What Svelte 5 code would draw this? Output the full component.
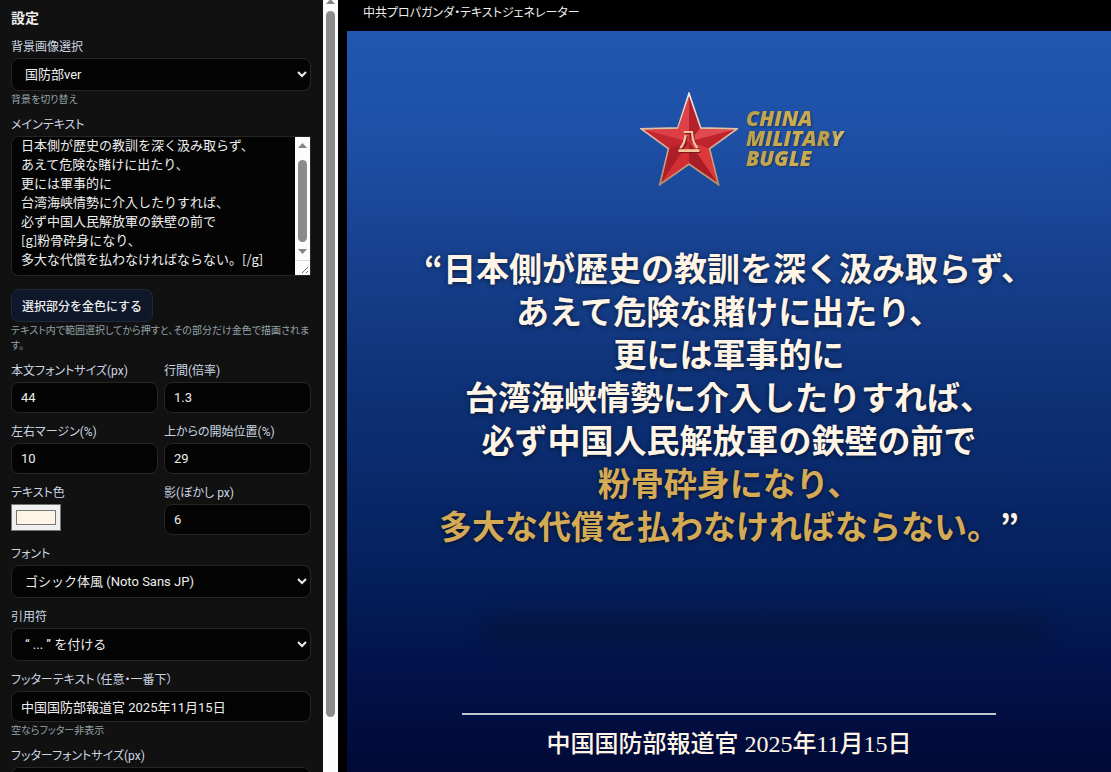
<script>
  let background = $state('mod');
  let mainText = $state(`日本側が歴史の教訓を深く汲み取らず、
あえて危険な賭けに出たり、
更には軍事的に
台湾海峡情勢に介入したりすれば、
必ず中国人民解放軍の鉄壁の前で
[g]粉骨砕身になり、
多大な代償を払わなければならない。[/g]`);
  let fontSize = $state('44');
  let lineHeight = $state('1.3');
  let margin = $state('10');
  let startY = $state('29');
  let color = $state('#fff5e6');
  let shadow = $state('6');
  let font = $state('sans');
  let quotes = $state('double');
  let footer = $state('中国国防部報道官 2025年11月15日');
  let footerSize = $state('32');
  let area;

  // Keep the last lines of the main text in view.
  $effect(() => {
    area.scrollTop = 11;
  });

  const lines = $derived.by(() => {
    let gold = false;
    return mainText.split('\n').map((raw) => {
      if (raw.includes('[g]')) gold = true;
      const line = { text: raw.replace('[g]', '').replace('[/g]', ''), gold };
      if (raw.includes('[/g]')) gold = false;
      return line;
    });
  });

  function goldSelection() {
    const { selectionStart: a, selectionEnd: b } = area;
    if (a === b) return;
    mainText = mainText.slice(0, a) + '[g]' + mainText.slice(a, b) + '[/g]' + mainText.slice(b);
  }
</script>

<div class="app">
  <aside>
    <form class="settings" onsubmit={(e) => e.preventDefault()}>
      <h1>設定</h1>
      <div class="field">
        <label for="bg">背景画像選択</label>
        <select id="bg" bind:value={background}>
          <option value="mod">国防部ver</option>
        </select>
        <p class="hint">背景を切り替え</p>
      </div>
      <div class="field">
        <label for="main">メインテキスト</label>
        <div class="area">
          <textarea id="main" bind:value={mainText} bind:this={area} spellcheck="false"></textarea>
          <div class="area-bar" aria-hidden="true">
            <svg viewBox="0 0 15 138" preserveAspectRatio="none">
              <rect width="15" height="138" fill="#fcfcfc" />
              <path d="M3 11l4.500-5 4.500 5zM3 112l4.500 5 4.500-5z" fill="#858585" />
              <rect x="3" y="23" width="9" height="82" rx="4.500" fill="#8b8b8b" />
              <path d="M0 123.500h15" stroke="#dcdcdc" />
              <path d="M7 136l6-6M11 136l2-2" stroke="#707070" />
            </svg>
          </div>
        </div>
        <button type="button" onclick={goldSelection}>選択部分を金色にする</button>
        <p class="hint">テキスト内で範囲選択してから押すと、その部分だけ金色で描画されます。</p>
      </div>
      <div class="pair">
        <div class="field">
          <label for="size">本文フォントサイズ(px)</label>
          <input id="size" type="text" inputmode="numeric" bind:value={fontSize} />
        </div>
        <div class="field">
          <label for="lh">行間(倍率)</label>
          <input id="lh" type="text" inputmode="decimal" bind:value={lineHeight} />
        </div>
        <div class="field">
          <label for="margin">左右マージン(%)</label>
          <input id="margin" type="text" inputmode="numeric" bind:value={margin} />
        </div>
        <div class="field">
          <label for="start">上からの開始位置(%)</label>
          <input id="start" type="text" inputmode="numeric" bind:value={startY} />
        </div>
        <div class="field">
          <label for="color">テキスト色</label>
          <input id="color" type="color" bind:value={color} />
        </div>
        <div class="field">
          <label for="shadow">影(ぼかし px)</label>
          <input id="shadow" type="text" inputmode="numeric" bind:value={shadow} />
        </div>
      </div>
      <div class="field">
        <label for="font">フォント</label>
        <select id="font" bind:value={font}>
          <option value="sans">ゴシック体風 (Noto Sans JP)</option>
        </select>
      </div>
      <div class="field">
        <label for="quotes">引用符</label>
        <select id="quotes" bind:value={quotes}>
          <option value="double">“ ... ” を付ける</option>
        </select>
      </div>
      <div class="field">
        <label for="footer">フッターテキスト（任意・一番下）</label>
        <input id="footer" type="text" bind:value={footer} />
        <p class="hint">空ならフッター非表示</p>
      </div>
      <div class="field">
        <label for="fsize">フッターフォントサイズ(px)</label>
        <input id="fsize" type="text" inputmode="numeric" bind:value={footerSize} />
      </div>
    </form>
    <div class="side-bar" aria-hidden="true">
      <svg width="15" height="11" viewBox="0 0 15 11"><path d="M3 4l4.500-5 4.500 5z" fill="#858585" /></svg>
      <div class="thumb"></div>
    </div>
  </aside>

  <main>
    <header>中共プロパガンダ・テキストジェネレーター</header>
    <section class="poster">
      <div class="logo">
        <svg class="star" viewBox="60 36 294 282" aria-hidden="true">
          <defs>
            <linearGradient id="rim" x1="0" y1="0" x2="0" y2="1">
              <stop offset="0" stop-color="#f4eee4" />
              <stop offset="0.5" stop-color="#d9b295" />
              <stop offset="1" stop-color="#b58b68" />
            </linearGradient>
          </defs>
          <path d="M207 42L242 144L350 147L268 206L295 313L207 252L120 313L146 206L65 147L174 144Z" fill="#c9252c" stroke="url(#rim)" stroke-width="6" />
          <g>
            <path d="M207 185V48L174 146Z" fill="#dc4248" />
            <path d="M207 185V48L240 146Z" fill="#b3222c" />
            <path d="M207 185L240 146L343 149Z" fill="#e04a4e" />
            <path d="M207 185L343 149L266 205Z" fill="#bf242d" />
            <path d="M207 185L266 205L291 307Z" fill="#dd383b" />
            <path d="M207 185L291 307L207 249Z" fill="#a61d27" />
            <path d="M207 185V249L124 307Z" fill="#d32e33" />
            <path d="M207 185L124 307L148 205Z" fill="#ac1f29" />
            <path d="M207 185L148 205L72 149Z" fill="#c3262e" />
            <path d="M207 185L72 149L174 146Z" fill="#dc4045" />
          </g>
          <g class="emblem">
            <text x="207" y="202" text-anchor="middle">八</text>
            <rect x="175" y="208" width="64" height="8" rx="2" />
          </g>
        </svg>
        <div class="name">
          <span>CHINA</span>
          <span>MILITARY</span>
          <span>BUGLE</span>
        </div>
      </div>
      <div class="quote" style:color>
        {#each lines as line, i}
          <p>{#if i === 0}<span class="mark">“</span>{/if}<span class:gold={line.gold}>{line.text}</span>{#if i === lines.length - 1}<span class="mark">”</span>{/if}</p>
        {/each}
      </div>
      <div class="smudge"></div>
      <footer>{footer}</footer>
    </section>
  </main>
</div>

<style>
  :global(body) {
    background: #000;
  }
  * {
    box-sizing: border-box;
  }
  .app {
    display: flex;
    height: 100vh;
    overflow: hidden;
    background: #000;
    color: #eee;
    font-family: Roboto, 'Noto Sans CJK JP', sans-serif;
  }
  aside {
    display: flex;
    flex: 0 0 338px;
    background: #111;
    overflow: hidden;
  }
  .settings {
    flex: 1;
    min-width: 0;
    display: flex;
    flex-direction: column;
    gap: 10px;
    padding: 8px 12px 0 11px;
  }
  h1 {
    margin: 0;
    font-size: 14px;
    line-height: 20px;
    font-weight: 700;
  }
  .field {
    display: flex;
    flex-direction: column;
    align-items: flex-start;
    min-width: 0;
  }
  label {
    font-size: 12px;
    line-height: 18px;
    margin-bottom: 2px;
    color: #cbd5e1;
    white-space: nowrap;
    font-feature-settings: 'palt';
  }
  .hint {
    margin: 1px 0 -1px;
    font-size: 10px;
    line-height: 15px;
    color: #94a3a8;
    font-feature-settings: 'palt';
  }
  input,
  select,
  textarea {
    width: 100%;
    border: 1px solid #262626;
    border-radius: 8px;
    background: #040404;
    color: #eee;
    font-family: Roboto, 'Noto Sans CJK JP', sans-serif;
    font-size: 13px;
    outline: none;
  }
  input {
    height: 31px;
    padding: 0 9px;
  }
  select {
    height: 33px;
    padding: 0 9px;
  }
  input[type='color'] {
    width: 50px;
    height: 27px;
    padding: 1px 2px;
    border: 1px solid #767676;
    border-radius: 0;
    background: #efefef;
  }
  .area {
    display: flex;
    width: 100%;
    height: 140px;
    border: 1px solid #262626;
    border-radius: 8px 0 0 8px;
    background: #040404;
  }
  textarea {
    flex: 1;
    min-width: 0;
    height: 100%;
    padding: 9px;
    border: 0;
    font-family: 'Noto Sans CJK JP', sans-serif;
    line-height: 19px;
    resize: none;
    overflow: hidden;
  }
  .area-bar {
    width: 15px;
  }
  .area-bar svg {
    display: block;
    width: 100%;
    height: 100%;
  }
  button {
    height: 33px;
    margin-top: 13px;
    padding: 0 10px;
    border: 1px solid #1f2937;
    border-radius: 8px;
    background: #0f172a;
    color: #eee;
    font-family: 'Noto Sans CJK JP', sans-serif;
    font-size: 12px;
    font-weight: 500;
  }
  .pair {
    display: grid;
    grid-template-columns: 1fr 1fr;
    gap: 10px 6px;
  }
  .side-bar {
    width: 15px;
    background: #fcfcfc;
  }
  .side-bar svg {
    display: block;
  }
  .thumb {
    width: 9px;
    height: calc(100% - 66px);
    margin: 0 3px;
    border-radius: 5px;
    background: #8b8b8b;
  }
  main {
    flex: 1;
    min-width: 0;
    display: flex;
    flex-direction: column;
    padding-left: 9px;
  }
  header {
    padding: 3px 16px 8px;
    font-size: 12px;
    line-height: 20px;
    font-feature-settings: 'palt';
  }
  .poster {
    flex: 1;
    display: flex;
    flex-direction: column;
    padding: 61px 0 13px;
    background: linear-gradient(#2157b0 0%, #1d4fa5 15%, #17418f 30%, #0e3277 48%, #09286a 62%, #041d57 76%, #02124a 86%, #010a37 100%);
  }
  .logo {
    display: flex;
    align-items: flex-start;
    gap: 8px;
    margin-left: calc(50% - 89px);
  }
  .star {
    width: 98px;
    height: 94px;
  }
  .emblem {
    fill: #f3c69b;
    font-family: 'Noto Sans CJK JP', sans-serif;
    font-size: 62px;
    font-weight: 500;
    filter: drop-shadow(3px 3px 1px #7a1820);
  }
  .name {
    display: flex;
    flex-direction: column;
    padding-top: 16px;
    font-family: 'Open Sans', sans-serif;
    font-size: 21px;
    font-weight: 800;
    font-style: italic;
    line-height: 20px;
    filter: drop-shadow(1px 1px 1px #23345a);
  }
  .name span {
    padding-right: 4px;
    background: linear-gradient(115deg, #b9a04a, #cfae50 50%, #b89c46 80%, #f3e3a4);
    background-clip: text;
    -webkit-background-clip: text;
    color: transparent;
  }
  .quote {
    margin-top: 60px;
    text-align: center;
    font-family: 'Noto Sans CJK JP', sans-serif;
    font-size: 33px;
    font-weight: 700;
    line-height: 43px;
    white-space: nowrap;
    text-spacing-trim: space-all;
    text-shadow: 0 1px 5px rgba(0, 0, 0, 0.6);
  }
  .quote p {
    margin: 0;
  }
  .mark {
    font-feature-settings: 'palt';
  }
  .gold {
    color: #d4aa55;
  }
  .smudge {
    height: 40px;
    margin: 64px 60px 0 135px;
    border-radius: 20px;
    background: #06153f;
    opacity: 0.6;
    filter: blur(8px);
  }
  footer {
    width: 70%;
    margin: auto auto 0;
    padding-top: 14px;
    border-top: 2px solid #c3c5cf;
    text-align: center;
    font-family: 'Liberation Serif', 'Noto Sans CJK JP', serif;
    font-size: 24px;
    font-weight: 500;
    line-height: 30px;
    white-space: nowrap;
    color: #fff5e6;
  }
</style>
